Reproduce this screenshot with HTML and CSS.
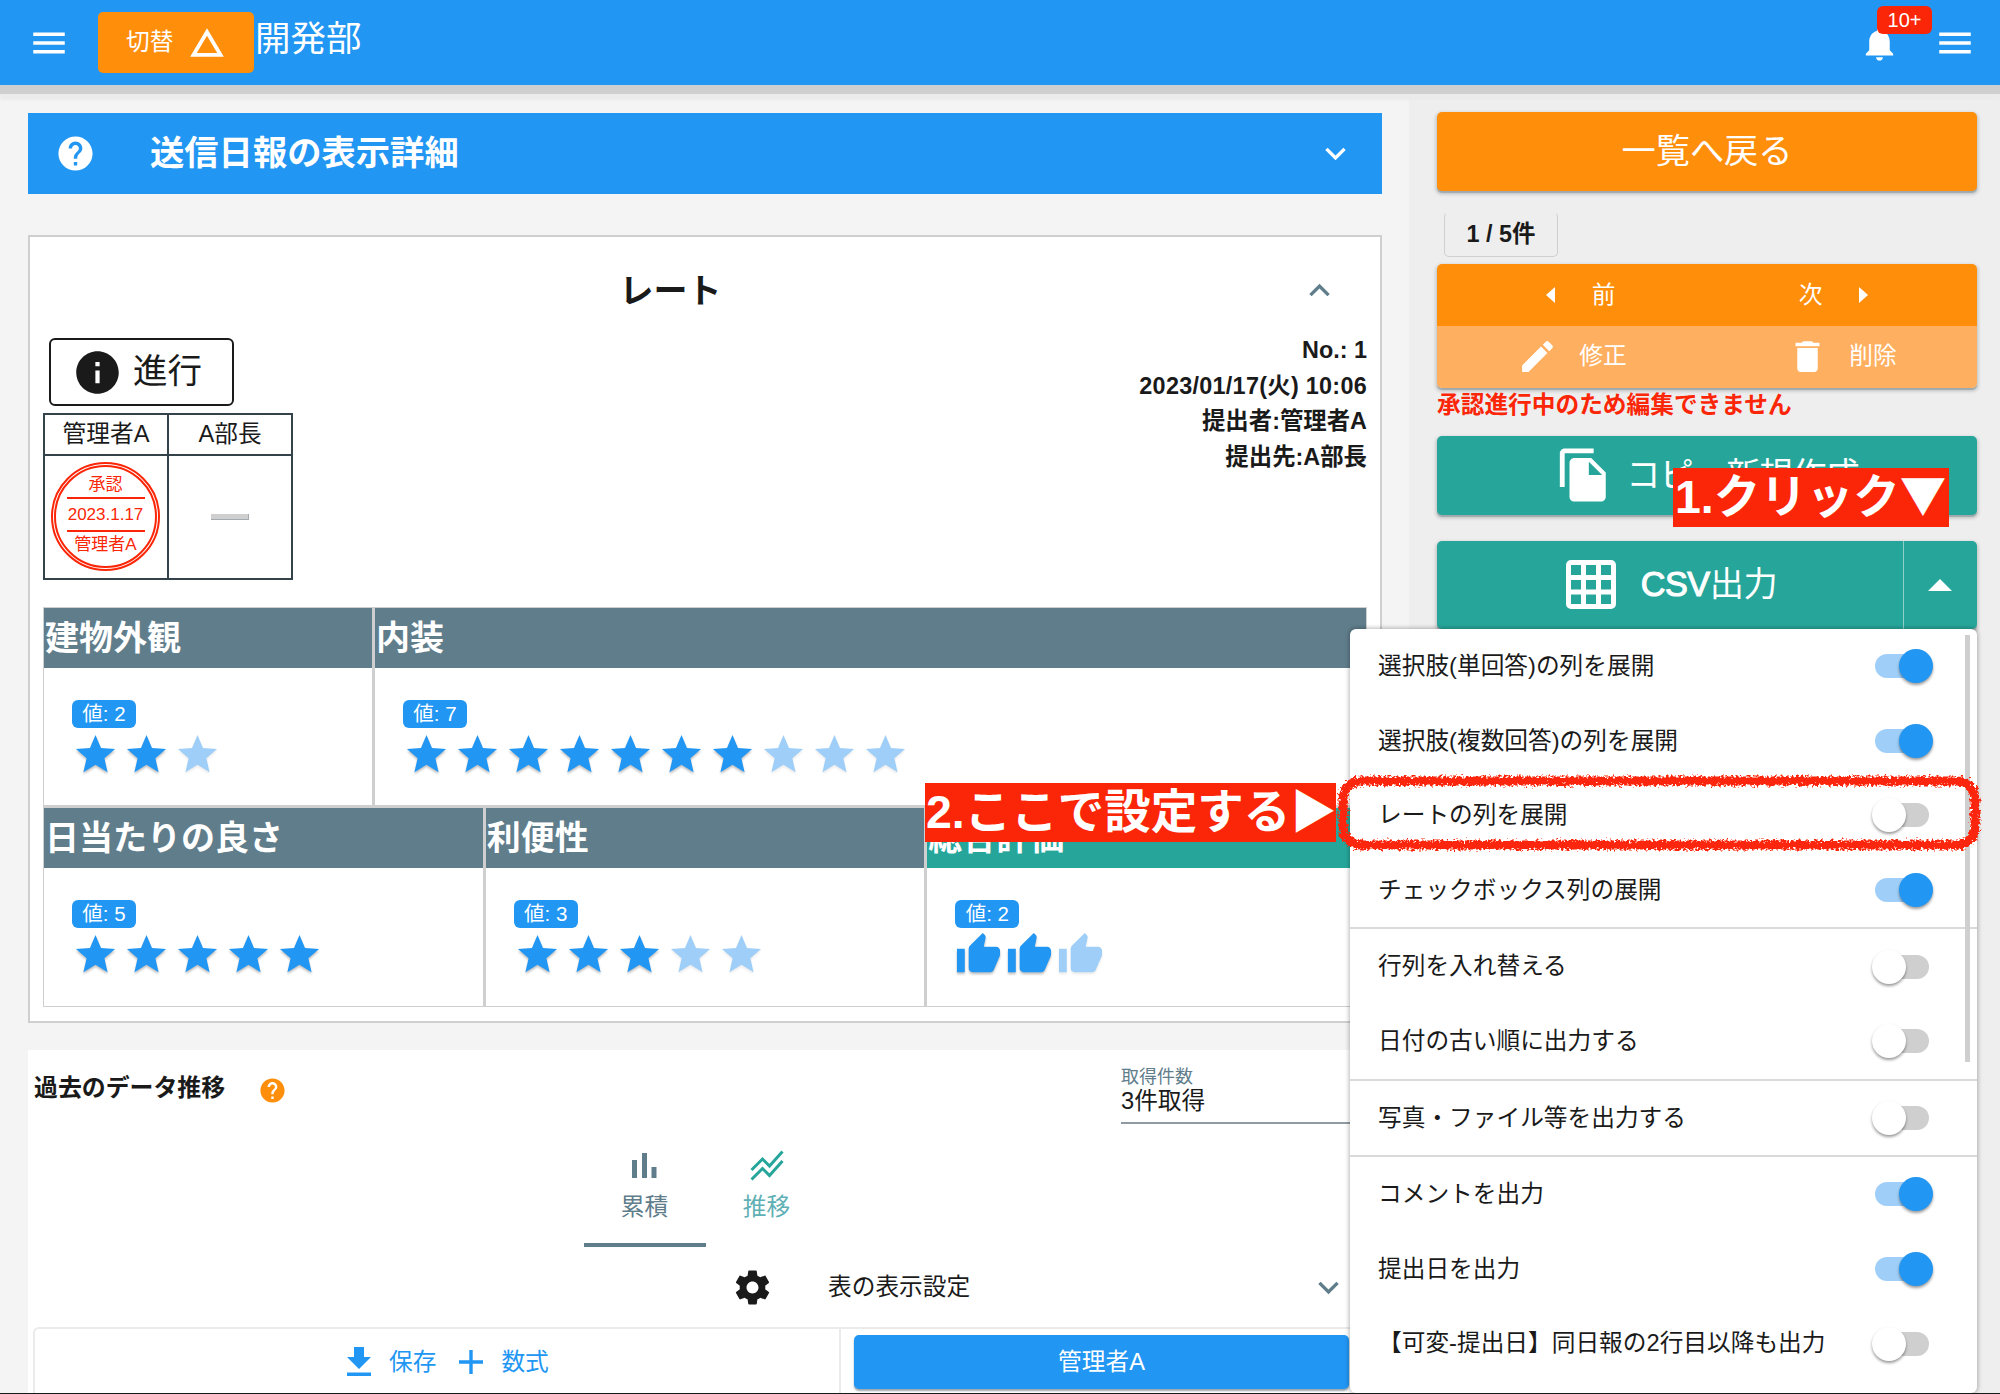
FILE: index.html
```html
<!DOCTYPE html>
<html lang="ja">
<head>
<meta charset="utf-8">
<title>送信日報の表示詳細</title>
<link rel="stylesheet" href="styles.css">
</head>
<body>
<svg class="defs" width="0" height="0" aria-hidden="true">
  <symbol id="i-star" viewBox="0 0 24 24"><path d="M12 17.27L18.18 21l-1.64-7.03L22 9.24l-7.19-.61L12 2 9.19 8.63 2 9.24l5.46 4.73L5.82 21z"/></symbol>
  <symbol id="i-thumb" viewBox="0 0 24 24"><path d="M1 21h4V9H1v12zm22-11c0-1.1-.9-2-2-2h-6.31l.95-4.57.03-.32c0-.41-.17-.79-.44-1.06L14.17 1 7.59 7.59C7.22 7.95 7 8.45 7 9v10c0 1.1.9 2 2 2h9c.83 0 1.54-.5 1.84-1.22l3.02-7.05c.09-.23.14-.47.14-.73v-2z"/></symbol>
  <symbol id="i-menu" viewBox="0 0 24 24"><path d="M3 18h18v-2H3v2zm0-5h18v-2H3v2zm0-7v2h18V6H3z"/></symbol>
  <symbol id="i-help" viewBox="0 0 24 24"><path d="M12 2C6.48 2 2 6.48 2 12s4.48 10 10 10 10-4.480 10-10S17.520 2 12 2zm1 17h-2v-2h2v2zm2.070-7.750l-.9.920C13.450 12.900 13 13.500 13 15h-2v-.5c0-1.100.450-2.100 1.170-2.830l1.240-1.260c.370-.360.590-.860.590-1.410 0-1.100-.9-2-2-2s-2 .9-2 2H8c0-2.210 1.790-4 4-4s4 1.790 4 4c0 .880-.360 1.680-.930 2.250z"/></symbol>
  <symbol id="i-down" viewBox="0 0 24 24"><path d="M7.410 8.590L12 13.170l4.590-4.580L18 10l-6 6-6-6z"/></symbol>
  <symbol id="i-up" viewBox="0 0 24 24"><path d="M7.410 15.410L12 10.830l4.590 4.580L18 14l-6-6-6 6z"/></symbol>
</svg>

<header class="topbar">
  <svg class="icon topbar-menu"><use href="#i-menu"/></svg>
  <button class="switch-btn">切替
    <svg width="34" height="29" viewBox="0 0 34 29"><path d="M17 4L30.500 26.800H3.500z" fill="none" stroke="#fff" stroke-width="3.800"/></svg>
  </button>
  <h1 class="dept">開発部</h1>
  <div class="bell">
    <svg viewBox="0 0 24 24"><path d="M12 22c1.100 0 2-.9 2-2h-4c0 1.100.890 2 2 2zm6-6v-5c0-3.070-1.640-5.640-4.500-6.320V4c0-.830-.670-1.500-1.500-1.500s-1.500.670-1.500 1.500v.680C7.630 5.360 6 7.920 6 11v5l-2 2v1h16v-1l-2-2z"/></svg>
    <span class="bell-badge">10+</span>
  </div>
  <svg class="icon topbar-menu"><use href="#i-menu"/></svg>
</header>

<div class="page">
  <main class="main">
    <section class="banner">
      <svg class="banner-help"><use href="#i-help"/></svg>
      <h2>送信日報の表示詳細</h2>
      <svg class="chev"><use href="#i-down"/></svg>
    </section>

    <section class="card">
      <div class="card-head"><h3>レート</h3><svg class="chev slate"><use href="#i-up"/></svg></div>
      <div class="card-info">
        <div class="approval">
          <div class="status">
            <svg viewBox="0 0 24 24"><path d="M12 2C6.480 2 2 6.480 2 12s4.480 10 10 10 10-4.480 10-10S17.520 2 12 2zm1 15h-2v-6h2v6zm0-8h-2V7h2v2z"/></svg>進行
          </div>
          <div class="flow">
            <div class="flow-name">管理者A</div><div class="flow-name">A部長</div>
            <div class="flow-cell"><div class="stamp"><span>承認</span><span class="stamp-date">2023.1.17</span><span>管理者A</span></div></div>
            <div class="flow-cell"><i class="dash"></i></div>
          </div>
        </div>
        <div class="meta"><div>No.: 1</div><div class="meta-date">2023/01/17(火) 10:06</div><div>提出者:管理者A</div><div>提出先:A部長</div></div>
      </div>
      <div class="rates">
        <div class="rate-row row-a">
          <div class="rate"><h4>建物外観</h4><div class="rate-body"><span class="tag">値: 2</span><div class="marks"><svg><use href="#i-star"/></svg><svg><use href="#i-star"/></svg><svg class="off"><use href="#i-star"/></svg></div></div></div>
          <div class="rate"><h4>内装</h4><div class="rate-body"><span class="tag">値: 7</span><div class="marks"><svg><use href="#i-star"/></svg><svg><use href="#i-star"/></svg><svg><use href="#i-star"/></svg><svg><use href="#i-star"/></svg><svg><use href="#i-star"/></svg><svg><use href="#i-star"/></svg><svg><use href="#i-star"/></svg><svg class="off"><use href="#i-star"/></svg><svg class="off"><use href="#i-star"/></svg><svg class="off"><use href="#i-star"/></svg></div></div></div>
        </div>
        <div class="rate-row row-b">
          <div class="rate"><h4>日当たりの良さ</h4><div class="rate-body"><span class="tag">値: 5</span><div class="marks"><svg><use href="#i-star"/></svg><svg><use href="#i-star"/></svg><svg><use href="#i-star"/></svg><svg><use href="#i-star"/></svg><svg><use href="#i-star"/></svg></div></div></div>
          <div class="rate"><h4>利便性</h4><div class="rate-body"><span class="tag">値: 3</span><div class="marks"><svg><use href="#i-star"/></svg><svg><use href="#i-star"/></svg><svg><use href="#i-star"/></svg><svg class="off"><use href="#i-star"/></svg><svg class="off"><use href="#i-star"/></svg></div></div></div>
          <div class="rate total"><h4>総合評価</h4><div class="rate-body"><span class="tag">値: 2</span><div class="marks"><svg><use href="#i-thumb"/></svg><svg><use href="#i-thumb"/></svg><svg class="off"><use href="#i-thumb"/></svg></div></div></div>
        </div>
      </div>
    </section>

    <section class="history">
      <div class="history-head">
        <h3>過去のデータ推移</h3>
        <svg class="history-help"><use href="#i-help"/></svg>
        <div class="select"><label>取得件数</label><div>3件取得</div></div>
      </div>
      <div class="tabs">
        <div class="tab active"><svg width="25" height="26" viewBox="0 0 25 26"><path d="M0 7h5v18H0zM10 0h5v25h-5zM19.500 14h5v11h-5z"/></svg>累積</div>
        <div class="tab"><svg width="34" height="31" viewBox="0 0 34 31"><path d="M1.500 20L12.500 9l7 7L32.500 1.500M1.500 29.500L12.500 18.500l7 7L32.500 11" fill="none" stroke="#26a69a" stroke-width="3"/></svg>推移</div>
      </div>
      <div class="table-settings">
        <svg class="gear" viewBox="0 0 24 24"><path d="M19.430 12.980c.040-.320.070-.640.070-.980s-.030-.660-.070-.980l2.110-1.650c.190-.150.240-.420.120-.640l-2-3.460c-.120-.220-.390-.3-.610-.220l-2.490 1c-.520-.4-1.080-.730-1.690-.980l-.380-2.650C14.460 2.180 14.250 2 14 2h-4c-.250 0-.460.180-.490.420l-.380 2.650c-.610.250-1.170.590-1.690.980l-2.490-1c-.230-.090-.490 0-.610.220l-2 3.460c-.130.220-.070.490.120.640l2.110 1.650c-.040.320-.070.650-.070.980s.030.660.070.980l-2.110 1.650c-.190.150-.240.420-.120.640l2 3.460c.120.220.390.3.610.220l2.490-1c.520.4 1.080.730 1.690.980l.380 2.650c.030.240.240.420.490.420h4c.250 0 .460-.180.490-.420l.380-2.650c.610-.250 1.170-.590 1.690-.980l2.490 1c.230.090.490 0 .610-.220l2-3.460c.120-.220.070-.490-.120-.640l-2.110-1.650zM12 15.500c-1.930 0-3.500-1.570-3.500-3.500s1.570-3.500 3.500-3.500 3.500 1.570 3.500 3.500-1.570 3.500-3.500 3.500z"/></svg>
        <span>表の表示設定</span>
        <svg class="chev slate"><use href="#i-down"/></svg>
      </div>
      <div class="datatable">
        <div class="dt-actions">
          <svg width="24" height="29" viewBox="0 0 24 29"><path d="M7 0h10v10h7L12 22 0 10h7zM0 25.500h24V29H0z"/></svg><span>保存</span>
          <svg width="24" height="24" viewBox="0 0 24 24"><path d="M10.300 0h3.400v10.300H24v3.400H13.700V24h-3.400V13.700H0v-3.400h10.300z"/></svg><span>数式</span>
        </div>
        <div class="dt-user"><button>管理者A</button></div>
      </div>
    </section>
  </main>

  <aside class="side">
    <button class="btn back">一覧へ戻る</button>
    <div class="count">1 / 5件</div>
    <div class="nav-group">
      <div class="nav-row">
        <div class="prev"><svg class="tri" width="9" height="16" viewBox="0 0 9 16"><path d="M9 0v16L0 8z"/></svg><span>前</span></div>
        <div class="next"><span>次</span><svg class="tri" width="9" height="16" viewBox="0 0 9 16"><path d="M0 0v16l9-8z"/></svg></div>
      </div>
      <div class="nav-row disabled">
        <div><svg class="ed" viewBox="0 0 24 24"><path d="M3 17.250V21h3.750L17.810 9.940l-3.750-3.750L3 17.250zM20.710 7.040c.390-.390.390-1.020 0-1.410l-2.340-2.340c-.390-.390-1.020-.390-1.410 0l-1.830 1.830 3.750 3.750 1.830-1.830z"/></svg><span>修正</span></div>
        <div><svg class="ed" viewBox="0 0 24 24"><path d="M6 19c0 1.100.9 2 2 2h8c1.100 0 2-.9 2-2V7H6v12zM19 4h-3.500l-1-1h-5l-1 1H5v2h14V4z"/></svg><span>削除</span></div>
      </div>
    </div>
    <p class="warn">承認進行中のため編集できません</p>
    <button class="btn green copy"><svg viewBox="0 0 24 24"><path d="M16 1H4c-1.100 0-2 .9-2 2v14h2V3h12V1zm-1 4l6 6v10c0 1.100-.9 2-2 2H7.990C6.890 23 6 22.100 6 21l.010-14c0-1.100.890-2 1.990-2h7zm-1 7h5.500L14 6.500V12z"/></svg><span>コピー新規作成</span></button>
    <div class="btn green csv">
      <div class="csv-main"><svg width="50" height="49" viewBox="0 0 50 49"><path fill-rule="evenodd" d="M5 0h40a5 5 0 0 1 5 5v39a5 5 0 0 1-5 5H5a5 5 0 0 1-5-5V5a5 5 0 0 1 5-5zM5 5v10h10V5zM20 5v10h10V5zM35 5v10h10V5zM5 20v9.500h10V20zM20 20v9.500h10V20zM35 20v9.500h10V20zM5 34.500V44h10v-9.500zM20 34.500V44h10v-9.500zM35 34.500V44h10v-9.500z"/></svg><span><b>CSV</b>出力</span></div>
      <div class="csv-toggle"><svg width="24" height="12" viewBox="0 0 24 12"><path d="M12 0l12 12H0z"/></svg></div>
    </div>
  </aside>
</div>

<div class="menu">
  <div class="item">選択肢(単回答)の列を展開<i class="toggle on"></i></div>
  <div class="item">選択肢(複数回答)の列を展開<i class="toggle on"></i></div>
  <div class="item">レートの列を展開<i class="toggle"></i></div>
  <div class="item">チェックボックス列の展開<i class="toggle on"></i></div>
  <hr>
  <div class="item">行列を入れ替える<i class="toggle"></i></div>
  <div class="item">日付の古い順に出力する<i class="toggle"></i></div>
  <hr>
  <div class="item">写真・ファイル等を出力する<i class="toggle"></i></div>
  <hr>
  <div class="item">コメントを出力<i class="toggle on"></i></div>
  <div class="item">提出日を出力<i class="toggle on"></i></div>
  <div class="item">【可変-提出日】同日報の2行目以降も出力<i class="toggle"></i></div>
  <i class="scrollbar"></i>
</div>

<div class="note note-1">1.クリック<span class="arrow">▼</span></div>
<div class="note note-2">2.ここで設定する<span class="arrow">▶</span></div>
<svg class="marker" width="660" height="92" viewBox="0 0 660 92">
  <defs><filter id="rough" x="-2%" y="-10%" width="104%" height="120%"><feTurbulence type="fractalNoise" baseFrequency="0.4" numOctaves="3" seed="4"/><feDisplacementMap in="SourceGraphic" scale="9" xChannelSelector="R" yChannelSelector="G"/></filter></defs>
  <rect x="14" y="14" width="632" height="64" rx="18" fill="none" stroke="#fb2607" stroke-width="9" filter="url(#rough)"/>
</svg>
<div class="bottom-line"></div>
</body>
</html>
```
FILE: styles.css
```css
* { box-sizing: border-box; }
body {
  margin: 0;
  position: relative;
  width: 2000px;
  height: 1394px;
  overflow: hidden;
  background: #f4f4f4;
  color: #1a1a1a;
  font: 23.7px/1.2 "Liberation Sans", "Noto Sans CJK JP", sans-serif;
}
h1, h2, h3, h4, p { margin: 0; }
button { border: 0; font: inherit; color: #fff; padding: 0; }
svg { display: block; flex: none; fill: currentColor; }
.defs { position: absolute; }

/* top bar */
.topbar {
  position: relative;
  z-index: 1;
  display: flex;
  align-items: center;
  height: 85px;
  padding: 0 24px 0 28px;
  background: #2196f3;
  color: #fff;
  box-shadow: 0 9px 0 #cfcfcf, 0 15px 2px #ebebeb;
}
.topbar-menu { width: 42px; height: 42px; }
.switch-btn {
  display: flex;
  align-items: center;
  gap: 17px;
  width: 156px;
  height: 61px;
  margin-left: 28px;
  padding-left: 28px;
  border-radius: 5px;
  background: #ff8e0a;
}
.dept { margin: -6px auto 0 1px; font-size: 35.500px; font-weight: 400; }
.bell { position: relative; margin: 2px 34px 0 0; }
.bell svg { width: 41px; height: 41px; }
.bell-badge {
  position: absolute;
  left: 18px;
  top: -17px;
  width: 55px;
  height: 28px;
  border-radius: 6px;
  background: #fb2607;
  font-size: 20px;
  line-height: 28px;
  text-align: center;
}

/* page columns */
.page { display: grid; grid-template-columns: 1409px 1fr; height: 1309px; }
.main { padding: 28px 27px 0 28px; }
.banner {
  display: flex;
  align-items: center;
  height: 81px;
  padding: 0 26px 0 27px;
  background: #2196f3;
  color: #fff;
}
.banner-help { width: 41px; height: 41px; }
.banner h2 { margin: 0 auto 0 54px; padding-top: 1px; font-size: 34.300px; }
.chev { width: 41px; height: 41px; }
.slate { color: #607d8b; }

/* report card */
.card {
  height: 788px;
  margin-top: 41px;
  padding: 0 13px;
  border: 2px solid #cfcfcf;
  background: #fff;
}
.card-head { display: grid; grid-template-columns: 40px 1fr 40px; align-items: center; height: 101px; padding: 6px 28px 0 0; }
.card-head h3 { grid-column: 2; padding: 2px 41px 0 0; font-size: 34px; text-align: center; }
.card-info { display: flex; justify-content: space-between; height: 269px; }
.status {
  display: flex;
  align-items: center;
  gap: 14px;
  width: 185px;
  height: 68px;
  margin-left: 6px;
  padding-left: 22px;
  border: 2px solid #1a1a1a;
  border-radius: 6px;
  font-size: 34.500px;
}
.status svg { width: 51px; height: 51px; margin: 0 -4px 0 -1px; }
.flow {
  display: grid;
  grid-template-columns: 122px 122px;
  grid-template-rows: 39px 122px;
  gap: 2px;
  width: 250px;
  margin-top: 7px;
  padding: 2px;
  background: #34424a;
}
.flow > div { display: flex; align-items: center; justify-content: center; background: #fff; }
.stamp {
  display: flex;
  flex-direction: column;
  align-items: center;
  width: 109px;
  height: 109px;
  margin: -1px 1px 0 0;
  padding-top: 6px;
  border: 5px double #fb2607;
  border-radius: 50%;
  color: #fb2607;
  font-size: 17px;
  line-height: 23px;
}
.stamp-date { width: 78px; margin: 1px 0; border: solid #fb2607; border-width: 2px 0; line-height: 31px; text-align: center; white-space: nowrap; }
.dash { width: 38px; height: 6px; background: #cfcfcf; border: solid #a4aaae; border-width: 0 1px 1px 0; }
.meta { margin-top: -5px; font-size: 23.400px; font-weight: 700; line-height: 35.500px; text-align: right; }
.meta-date { letter-spacing: .28px; }

.rates { display: grid; grid-template-rows: 197px 198px; gap: 3px; height: 400px; border: 1px solid #cfcfcf; background: #cfcfcf; }
.rate-row { display: grid; gap: 3px; }
.row-a { grid-template-columns: 328px 1fr; }
.row-b { grid-template-columns: 1fr 1fr 1fr; }
.rate { background: #fff; }
.rate h4 { display: flex; align-items: center; height: 60px; padding: 1px 0 0 1px; background: #607d8b; color: #fff; font-size: 34px; }
.total h4 { background: #26a69a; }
.rate-body { padding: 32px 28px 0; }
.tag {
  display: flex;
  align-items: center;
  justify-content: center;
  width: 64px;
  height: 28px;
  padding-top: 1px;
  border-radius: 6px;
  background: #2196f3;
  color: #fff;
  font-size: 20.500px;
}
.marks { display: flex; gap: 4px; padding-top: 3px; color: #2196f3; }
.marks svg { width: 47px; height: 47px; filter: drop-shadow(0 2px 1px rgba(0, 0, 0, .25)); }
.marks .off { color: #9fcff8; filter: drop-shadow(0 2px 1px rgba(0, 0, 0, .08)); }

/* past data */
.history { height: 344px; margin-top: 27px; padding: 0 0 0 5px; background: #fff; }
.history-head { display: flex; height: 74px; padding-left: 1px; }
.history-head h3 { padding-top: 24px; font-size: 23.900px; }
.history-help { width: 29px; height: 29px; margin: 26px 0 0 33px; color: #ff8e0a; }
.select { width: 261px; margin-left: auto; padding-top: 15px; border-bottom: 2px solid #8f9ba1; }
.select label { display: block; color: #607d8b; font-size: 18px; line-height: 24px; }
.select div { line-height: 24px; }
.tabs { display: flex; justify-content: center; height: 123px; padding-right: 4px; }
.tab { display: flex; flex-direction: column; align-items: center; justify-content: flex-end; gap: 12px; width: 122px; padding-bottom: 26px; color: #5fb0b5; }
.tab.active { padding-bottom: 22px; border-bottom: 4px solid #607d8b; color: #607d8b; }
.tab.active svg { margin-bottom: 2px; }
.table-settings { display: flex; align-items: center; height: 80px; padding: 0 33px 0 699px; }
.gear { width: 41px; height: 41px; }
.table-settings span { margin: 0 auto 0 55px; }
.datatable { display: flex; height: 67px; border: solid #ebebeb; border-width: 2px 0 0 2px; border-radius: 6px 0 0 0; }
.dt-actions { display: flex; align-items: center; width: 806px; padding-left: 312px; border-right: 2px solid #ebebeb; color: #2196f3; }
.dt-actions span { margin: 1px 23px 0 18px; }
.dt-user { padding: 6px 0 0 13px; }
.dt-user button { width: 495px; height: 54px; border-radius: 5px; background: #2196f3; box-shadow: 0 2px 2px #9aa5ac; }

/* side column */
.side { padding: 27px 23px 0 28px; background: #eee; }
.btn {
  display: flex;
  align-items: center;
  justify-content: center;
  width: 540px;
  height: 79px;
  border-radius: 5px;
  color: #fff;
  font-size: 34.200px;
  box-shadow: 0 2px 1px #9fa9ad, 0 2px 3px 2px #cfcfcf;
}
.back { background: #ff8e0a; }
.count {
  width: 114px;
  height: 45px;
  margin: 21px 0 0 7px;
  border: 1px solid #cfcfcf;
  border-top-color: #eee;
  border-radius: 5px;
  font-weight: 700;
  font-size: 23.400px;
  line-height: 43px;
  text-align: center;
}
.nav-group { margin-top: 7px; border-radius: 5px; overflow: hidden; box-shadow: 0 2px 1px #9fa9ad, 0 2px 3px 2px #cfcfcf; width: 540px; color: #fff; }
.nav-row { display: grid; grid-template-columns: 1fr 1fr; height: 62px; background: #ff8e0a; }
.nav-row > div { display: flex; align-items: center; justify-content: center; gap: 37px; }
.nav-row > .prev { padding-left: 17px; }
.nav-row > .next { padding-right: 17px; }
.nav-row.disabled { background: #ffaf60; }
.nav-row.disabled > div { gap: 21px; padding-bottom: 2px; }
.ed { width: 41px; height: 41px; }
.warn { height: 34px; margin-top: 1px; color: #fb2607; font-weight: 700; line-height: 33px; }
.green { background: #26a69a; }
.copy { margin-top: 13px; gap: 13px; }
.copy svg { width: 58px; height: 58px; margin-top: -2px; }
.copy span { letter-spacing: -1px; }
.csv { height: 88px; margin-top: 26px; }
.csv-main { display: flex; align-items: center; justify-content: center; gap: 25px; width: 466px; padding-left: 3px; letter-spacing: -.4px; }
.csv-main svg { margin-top: -2px; }
.csv-main b { font-weight: 400; -webkit-text-stroke: 1.100px #fff; }
.csv-toggle { display: flex; align-items: center; justify-content: center; width: 74px; height: 88px; padding: 0 2px 1px 0; border-left: 1px solid #8fd0ca; }

/* export options menu */
.menu {
  position: absolute;
  z-index: 2;
  left: 1350px;
  top: 629px;
  width: 627px;
  height: 764px;
  border-radius: 6px;
  background: #fff;
  box-shadow: 0 0 4px 1px rgba(0, 0, 0, .28);
}
.item { display: flex; align-items: center; justify-content: space-between; height: 74.600px; padding: 0 48px 0 28px; }
.menu hr { height: 2px; margin: 0; border: 0; background: #dadada; }
.toggle { position: relative; width: 54px; height: 24px; border-radius: 12px; background: #cfcfcf; }
.toggle::after {
  content: "";
  position: absolute;
  left: -3px;
  top: -5px;
  width: 34px;
  height: 34px;
  border-radius: 50%;
  background: #fff;
  box-shadow: 0 2px 3px rgba(0, 0, 0, .4);
}
.toggle.on { background: #9fcff8; }
.toggle.on::after { left: 24px; background: #2196f3; }
.scrollbar { position: absolute; right: 7px; top: 6px; width: 5px; height: 427px; background: #cfcfcf; }

/* callouts */
.note {
  position: absolute;
  z-index: 3;
  height: 59px;
  background: #fb2607;
  color: #fff;
  font-weight: 700;
  font-size: 46.500px;
  line-height: 59px;
  white-space: nowrap;
}
.note .arrow { font-family: "Noto Sans CJK JP", sans-serif; line-height: 0; }
.note-1 { left: 1673px; top: 468px; width: 276px; padding-left: 2px; }
.note-2 { left: 925px; top: 783px; width: 411px; padding-left: 1px; }
.marker { position: absolute; z-index: 3; left: 1329px; top: 767px; }
.bottom-line { position: absolute; z-index: 4; left: 0; bottom: 0; width: 2000px; height: 1px; background: #1a1a1a; }
```
